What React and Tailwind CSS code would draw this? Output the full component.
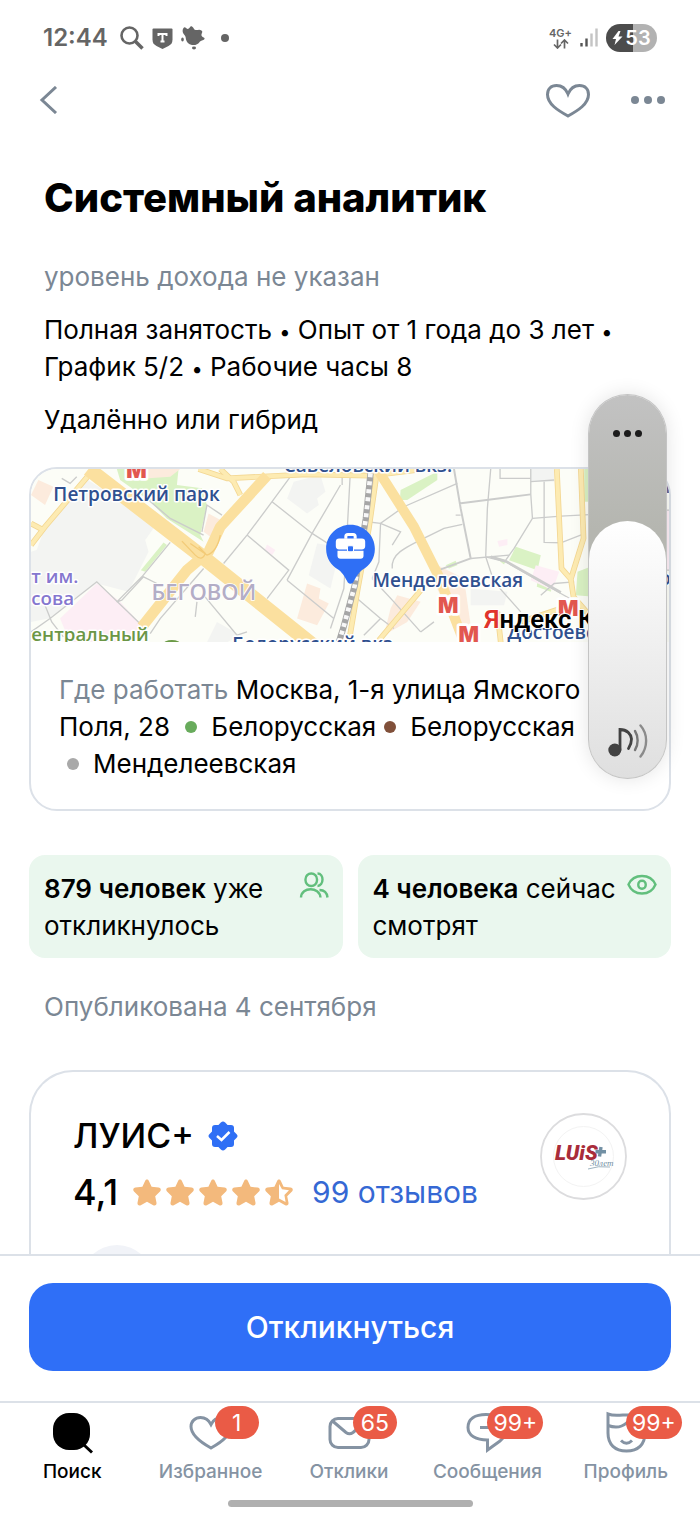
import { useState } from "react";
import clsx from "clsx";

const STATIONS = [
  { name: "Белорусская", dot: "bg-[#68ab5c]" },
  { name: "Белорусская", dot: "bg-[#80503a]" },
  { name: "Менделеевская", dot: "bg-[#a9a9a9]" },
];

const HEART =
  "M24 16.5C21.5 11.5 17.5 9.5 13.5 9.5C8 9.5 4 13.5 4 18.5C4 28 15 35 24 40C33 35 44 28 44 18.5C44 13.5 40 9.5 34.5 9.5C30.5 9.5 26.5 11.5 24 16.5Z";

const TABS = [
  {
    id: "search",
    label: "Поиск",
    icon: (
      <>
        <rect x="5" y="5" width="37" height="37" rx="16" fill="currentColor" stroke="none" />
        <path d="M35 36L44 44.500" />
      </>
    ),
  },
  { id: "favorites", label: "Избранное", badge: "1", icon: <path d={HEART} /> },
  {
    id: "responses",
    label: "Отклики",
    badge: "65",
    icon: (
      <>
        <rect x="5" y="10.500" width="39" height="29" rx="8" />
        <path d="M7.500 13L21 24.500Q24.500 27 28 24.500L41.500 13" />
      </>
    ),
  },
  {
    id: "messages",
    label: "Сообщения",
    badge: "99+",
    icon: (
      <>
        <path d="M23 6.500C12 6.500 5 11 5 19.500C5 27.500 13 32 24.500 32V42L37 33C41 30 43 25 43 19.500C43 11 36 6.500 23 6.500Z" />
        <path d="M17 19.500H32" />
      </>
    ),
  },
  {
    id: "profile",
    label: "Профиль",
    badge: "99+",
    icon: (
      <>
        <path d="M6 6C11 8 16 7.500 21 7H28C33 7.500 38 8 43 6V25C43 36.500 36 43 24.500 43C13 43 6 36.500 6 25Z" />
        <path d="M6 17.500C14 20.500 20 19 24.500 15C29 19 35 20.500 43 17.500" />
        <path d="M19 32.500Q24.500 38 30 32.500" />
      </>
    ),
  },
];

function StatusBar() {
  return (
    <div className="flex h-[76px] items-center justify-between px-[43px] text-[#656565]">
      <div className="flex items-center">
        <span className="text-[24px] leading-8 font-semibold">12:44</span>
        <svg className="ml-3 size-6" viewBox="0 0 24 24" fill="none" stroke="currentColor" strokeWidth="2.600">
          <circle cx="9.500" cy="9.500" r="8" />
          <path d="M15.500 15.500L22.500 22.500" strokeWidth="3.600" />
        </svg>
        <svg className="ml-2 h-6 w-[21px]" viewBox="0 0 21 24">
          <path d="M0.500 3.500Q0.500 2.500 1.500 2.500H19.500Q20.500 2.500 20.500 3.500V13.500Q20.500 18 16.500 20L10.500 23L4.500 20Q0.500 18 0.500 13.500Z" fill="currentColor" />
          <path d="M6.500 10V8H14.500V10M10.500 8V15.500M8.500 15.500H12.500" stroke="#fff" strokeWidth="2" fill="none" />
        </svg>
        <svg className="ml-2 size-6" viewBox="0 0 24 24" fill="currentColor">
          <path d="M2.500 2C4 0 5 3 7 3C9 2.500 9 -0.500 11 0.500C13 1.500 12.500 3.500 14.500 4C16.500 4.500 18 3 20.500 4.500C22.500 6 20 7.500 20.500 9.500C21 11.500 24 11 23.500 13C23 14.500 20.500 14 19 15.500C17 18.500 14 19.500 11 19C7.500 18.500 5.500 16 5 13.500C4.700 12 5 11 3.500 9C1.500 7 1 4 2.500 2Z" />
          <ellipse cx="1.500" cy="13.500" rx="1.300" ry="2" />
          <ellipse cx="13" cy="22" rx="2" ry="1.400" />
        </svg>
        <span className="ml-4 size-2 rounded-full bg-current" />
      </div>
      <div className="flex items-center">
        <div className="flex flex-col items-center">
          <span className="text-[11px] leading-3 font-semibold">4G+</span>
          <svg className="h-[10px] w-4" viewBox="0 0 16 10" fill="none" stroke="currentColor" strokeWidth="1.700">
            <path d="M4.500 0.500V8.500M1 5.500L4.500 9L8 5.500M11.500 9.500V1.500M8 4.500L11.500 1L15 4.500" />
          </svg>
        </div>
        <svg className="ml-2 h-5 w-[18px]" viewBox="0 0 18 20" fill="none" strokeWidth="2.400">
          <path d="M1.500 15V18.500M6.500 10.500V18.500" stroke="#555" />
          <path d="M11.500 5.500V18.500M16.500 0.500V18.500" stroke="#c4c4c4" />
        </svg>
        <div className="ml-2 flex h-7 w-[51px] items-center justify-center gap-[2px] rounded-full bg-linear-to-r from-[#4c4c4c] from-53% to-[#b2b2b2] to-53% text-white">
          <svg className="h-4 w-[11px]" viewBox="0 0 11 16" fill="currentColor">
            <path d="M6.500 1L0.500 9H4L2.500 15L10.500 6.500H6.500L8.500 1Z" />
          </svg>
          <span className="text-[20px] leading-7 font-semibold">53</span>
        </div>
      </div>
    </div>
  );
}

function CityMap() {
  return (
    <svg className="block w-full" viewBox="33 42 1911 519" role="img" aria-label="Карта">
      <rect x="33" y="42" width="1911" height="519" fill="#fcfdf7" />

      {/* built-up areas and parks */}
      <g fill="#f3f4f2">
        <path d="M195 70L410 205L375 255L385 290L325 410L230 385L85 490L33 500V290L50 285L70 230Z" />
        <path d="M820 80L900 60L915 110L890 130L895 150L860 175L800 130Z" />
        <path d="M890 265L960 275L930 400L865 360Z" />
        <path d="M1350 400L1460 410L1450 450L1350 450Z" />
        <path d="M1530 42H1600V80H1530Z" />
        <path d="M590 500L660 540L620 561H560Z" />
      </g>
      <g fill="#daf2c4">
        <path d="M290 42H475L470 90L545 100L560 150L540 240L550 260L440 190L385 135L300 75Z" />
        <path d="M430 262L440 270L375 350L362 345Z" />
        <path d="M200 465L220 452L243 480L222 497Z" />
        <path d="M1140 105L1230 60L1250 50L1250 75L1160 135H1138Z" />
        <path d="M1485 275L1560 300L1550 345L1465 315Z" />
        <path d="M1420 305L1455 315L1450 328Z" />
        <path d="M1275 330L1305 317L1310 330L1285 340Z" />
        <path d="M1550 380L1595 390L1590 410L1548 395Z" />
        <path d="M1690 42H1720V140H1690ZM1670 350L1720 330V425L1665 420Z" />
      </g>
      <g fill="#fcebdd">
        <path d="M55 75L100 95L75 150L33 120Z" />
        <path d="M340 42H480L450 65L385 70Z" />
        <path d="M565 175L610 200L570 245L550 230Z" />
        <path d="M860 385L900 400L895 430L925 445L890 510L830 490Z" />
        <path d="M1130 420L1200 440L1160 500L1090 540L1110 460Z" />
        <path d="M1230 320L1330 370L1350 510L1300 520L1250 400Z" />
      </g>
      <g fill="#fdeef5">
        <path d="M230 385L300 440L365 510L330 561H150L120 490Z" />
        <path d="M740 268L765 285L755 300L733 285Z" />
        <path d="M1430 258L1460 252L1460 270L1435 275Z" />
        <path d="M1545 330L1615 350L1595 405L1530 375Z" />
        <path d="M1935 165H1944V345H1935Z" />
      </g>

      {/* minor streets */}
      <g fill="none" stroke="#cbcccb" strokeWidth="4">
        <path d="M125 70L150 85L170 65M385 135L450 190L550 240M545 230L560 150L605 180" />
        <path d="M450 262L365 365L290 440L305 435L370 365L410 385" />
        <path d="M33 530L90 490L230 380L370 515M75 450L95 500L130 545" />
        <path d="M390 535L420 490L550 340M610 325L680 240L755 140L810 65M755 140L875 235L930 270" />
        <path d="M680 240L805 345L740 430M600 330L700 420M800 375L940 490M960 90L875 235L800 375" />
        <path d="M530 440L525 485M550 420L650 540L680 530" />
        <path d="M965 60V90M990 42L975 320L970 400L930 520" />
        <path d="M1300 42L1320 160L1350 310L1240 350M1315 145L1530 118" strokeWidth="6" />
        <path d="M1410 42L1400 160L1395 305M1438 42V70H1530M1310 85L1150 155L1080 205L1040 200" />
        <path d="M1530 42V118L1535 190L1480 280L1455 315M1535 190L1620 183L1720 178M1305 180H1320" />
        <path d="M1570 80V262L1620 263L1685 238M1530 80L1600 75M1350 310L1465 300" />
        <path d="M1115 340C1110 290 1160 275 1270 220L1325 208M1080 205L1075 320L1055 370M1080 205L1140 230L1115 270" />
        <path d="M1055 370L1120 440L1200 530M1010 430L1080 490L1030 540M1080 490L1120 520M1200 530L1240 500" />
        <path d="M1395 305L1455 320L1620 415L1665 440M1395 305L1420 380L1500 470M1660 380L1600 385L1560 420" />
        <path d="M1935 165H1944M1935 345H1944" />
      </g>
      <path d="M1410 305L1455 318L1620 412" fill="none" stroke="#cbcccb" strokeWidth="8" />

      {/* secondary yellow roads */}
      <g fill="none" stroke="#f3d793" strokeWidth="17">
        <path d="M33 270L75 215L215 50M33 205L70 225" />
        <path d="M535 42L620 70L860 58L1050 62L1190 45M600 42L640 80L660 120" />
        <path d="M1068 60L1045 220L1012 400L985 561" />
        <path d="M1608 42L1622 340L1650 372L1688 250L1680 42M1650 372L1658 425L1710 485" />
        <path d="M1205 400L1075 555M1500 500L1620 460M1430 470L1440 561" />
      </g>
      <g fill="none" stroke="#fdebb2" strokeWidth="12">
        <path d="M33 270L75 215L215 50M33 205L70 225" />
        <path d="M535 42L620 70L860 58L1050 62L1190 45M600 42L640 80L660 120" />
        <path d="M1068 60L1045 220L1012 400L985 561" />
        <path d="M1608 42L1622 340L1650 372L1688 250L1680 42M1650 372L1658 425L1710 485" />
        <path d="M1205 400L1075 555M1500 500L1620 460M1430 470L1440 561" />
      </g>

      {/* avenues */}
      <g fill="none" stroke="#fbe09f" strokeLinejoin="round">
        <path d="M205 42L540 300L890 580" strokeWidth="44" />
        <path d="M365 515L500 345L565 290L600 215L740 62" strokeWidth="32" />
        <path d="M1075 50L1180 215L1255 365L1330 561" strokeWidth="30" />
      </g>
      <path d="M485 258L525 300Q545 320 555 295L535 275M510 265L560 300Q590 290 600 240" fill="none" stroke="#f3cb78" strokeWidth="4" />

      {/* railway */}
      <path d="M1050 55L1036 190L1003 390L968 520L955 561" fill="none" stroke="#a6a6a6" strokeWidth="19" />
      <path d="M1050 55L1036 190L1003 390L968 520L955 561" fill="none" stroke="#f8f8f8" strokeWidth="14" strokeDasharray="12 12" />

      <ellipse cx="455" cy="568" rx="26" ry="14" fill="#6b9a46" />

      <g fontFamily="'Open Sans', 'Noto Sans', sans-serif" fontWeight="600" stroke="#fff" strokeWidth="9" strokeLinejoin="round" paintOrder="stroke">
        <g fill="#e2574f" fontFamily="Inter, sans-serif" fontWeight="900" fontSize="64" textAnchor="middle" strokeWidth="16">
          <text x="349" y="70">М</text>
          <text x="1283" y="472">М</text>
          <text x="1344" y="561">М</text>
          <text x="1642" y="482">М</text>
        </g>
        <g fill="#30508f" fontSize="57">
          <text x="100" y="138">Петровский парк</text>
          <text x="790" y="50">Савеловский вкз.</text>
          <text x="636" y="588">Белорусский вкз.</text>
          <text x="1056" y="394">Менделеевская</text>
          <text x="1460" y="550">Достоевская</text>
          <text x="1915" y="115">л</text>
          <text x="1915" y="388">о</text>
        </g>
        <g fill="#8577cf" fontSize="56">
          <text x="34" y="383">т им.</text>
          <text x="34" y="450">сова</text>
        </g>
        <text x="34" y="556" fill="#6b9646" fontSize="56">ентральный</text>
        <text x="394" y="435" fill="#b3adc6" fontSize="66" strokeWidth="5">БЕГОВОЙ</text>
      </g>
      <text x="1390" y="519" fontFamily="Roboto, sans-serif" fontWeight="600" fontSize="77" stroke="#fff" strokeWidth="6" paintOrder="stroke">
        <tspan fill="#e0342b">Я</tspan>ндекс Карты
      </text>

      {/* workplace pin */}
      <path d="M990 209C1030 209 1063 241 1063 281C1063 310 1048 330 1026 344C1012 354 1004 372 998 382Q990 390 982 382C976 372 968 354 954 344C932 330 917 310 917 281C917 241 950 209 990 209Z" fill="#2f6ff5" />
      <path d="M976 251V244Q976 238 982 238H998Q1004 238 1004 244V251" fill="none" stroke="#fff" strokeWidth="9" />
      <rect x="946" y="250" width="88" height="33" rx="10" fill="#fff" />
      <path d="M951 287H1029V302Q1029 311 1020 311H960Q951 311 951 302Z" fill="#fff" />
      <rect x="981" y="272" width="18" height="18" rx="4" fill="#2f6ff5" stroke="#fff" strokeWidth="3" />
    </svg>
  );
}

function Sep() {
  return <span className="text-[20px] leading-none">•</span>;
}

function Stat({ strong, rest, children }) {
  return (
    <div className="flex items-start justify-between rounded-2xl bg-[#eaf7ee] pt-[15px] pr-[14px] pb-[14px] pl-[15px]">
      <p>
        <span className="font-semibold">{strong}</span> {rest}
      </p>
      <svg className="-ml-6 size-[30px] shrink-0 text-[#62bf7d]" viewBox="0 0 30 30" fill="none" stroke="currentColor" strokeWidth="2.400">
        {children}
      </svg>
    </div>
  );
}

const STAR =
  "M15 2.500C15.800 2.500 16.400 3 16.800 3.800L19.600 9.800L26.600 10.600C28.800 11 29.500 13 28 14.600L23.200 19.200L24.500 25.800C24.800 28 23 29.200 21.200 28.200L15 24.800L8.800 28.200C7 29.200 5.200 28 5.500 25.800L6.800 19.200L2 14.600C0.500 13 1.200 11 3.400 10.600L10.400 9.800L13.200 3.800C13.600 3 14.200 2.500 15 2.500Z";

function Star({ half }) {
  return (
    <svg className="size-[30px]" viewBox="0 0 30 30" fill="#f3b97c">
      <path d={STAR} />
      {half && <path d="M15 7L18 12.300L25 13.200L20.400 18L21.600 25L15 21.600Z" fill="#fff" />}
    </svg>
  );
}

function CompanyLogo() {
  return (
    <svg className="size-[87px] shrink-0" viewBox="0 0 87 87" role="img" aria-label="LUIS+">
      <circle cx="43.500" cy="43.500" r="42.500" fill="#fff" stroke="#dcdcde" strokeWidth="1.800" />
      <circle cx="43.500" cy="43.500" r="30" fill="none" stroke="#f3f3f3" />
      <text x="15" y="47" fontFamily="Roboto, sans-serif" fontStyle="italic" fontWeight="900" fontSize="21" fill="#a92c3a">
        LUiS
      </text>
      <path d="M61 34L59.500 43.500M55.500 38.800H66" stroke="#7290a4" strokeWidth="3.400" />
      <text x="50" y="53" fontFamily="'Liberation Serif', serif" fontStyle="italic" fontSize="9" fill="#7290a4">
        30лет
      </text>
      <path d="M48 56Q58 52.500 70 54" stroke="#7290a4" strokeWidth="0.700" fill="none" />
    </svg>
  );
}

function VolumeSlider() {
  const [volume, setVolume] = useState(67);

  return (
    <div className="fixed top-[395px] right-[34px] flex h-[383px] w-[77px] flex-col justify-end overflow-hidden rounded-full bg-linear-to-b from-[#c2c2c2] to-[#b5b6b0] to-35% shadow-[0_0_20px_rgba(0,0,0,0.12)] ring-1 ring-[#c4c4c4]">
      <div
        className="flex items-end justify-center rounded-t-full bg-linear-to-b from-white to-[#dfdfdf] pb-5"
        style={{ height: `${volume}%` }}
      >
        <svg className="h-[34px] w-10" viewBox="0 0 40 34" fill="none" strokeLinecap="round">
          <circle cx="6.800" cy="26" r="6.500" fill="#424242" />
          <path d="M12 26V5.500C19 5.500 23 10 23.500 15C23.500 19 22.500 21.500 20.500 24.500" stroke="#424242" strokeWidth="2.800" />
          <path d="M27 7C30.500 12.500 30.500 20.500 27 26" stroke="#777" strokeWidth="2.400" />
          <path d="M32.500 1.500C40 10 40 23 32.500 32.500" stroke="#8b8b8b" strokeWidth="2.400" />
        </svg>
      </div>
      <input
        type="range"
        aria-label="Громкость"
        value={volume}
        onChange={(e) => setVolume(Number(e.target.value))}
        className="absolute inset-0 h-full w-full opacity-0 [direction:rtl] [writing-mode:vertical-lr]"
      />
      <button aria-label="Ещё настройки звука" className="absolute inset-x-0 top-[26px] flex h-6 items-center justify-center gap-1">
        <span className="size-[7px] rounded-full bg-[#1c1c1c]" />
        <span className="size-[7px] rounded-full bg-[#1c1c1c]" />
        <span className="size-[7px] rounded-full bg-[#1c1c1c]" />
      </button>
    </div>
  );
}

export default function App() {
  const [tab, setTab] = useState("search");
  const [liked, setLiked] = useState(false);

  return (
    <div className="flex h-screen flex-col bg-white font-[Inter,sans-serif] text-[26px] leading-[37px] text-black">
      <StatusBar />

      <header className="flex h-12 shrink-0 items-center justify-between px-[35px] text-[#7b8794]">
        <button aria-label="Назад">
          <svg className="size-7" viewBox="0 0 28 28" fill="none" stroke="currentColor" strokeWidth="3">
            <path d="M21 1L7 14L21 27" />
          </svg>
        </button>
        <div className="flex items-center gap-[39px]">
          <button aria-label="В избранное" onClick={() => setLiked(!liked)}>
            <svg className="size-12" viewBox="0 0 48 48" fill={liked ? "currentColor" : "none"} stroke="currentColor" strokeWidth="3">
              <path d="M24 18C21.500 12 17 9.500 12.500 9.500C7 9.500 3.500 13 3.500 18.500C3.500 28 14 34.500 24 40C34 34.500 44.500 28 44.500 18.500C44.500 13 41 9.500 35.500 9.500C31 9.500 26.500 12 24 18Z" />
            </svg>
          </button>
          <button aria-label="Ещё" className="flex gap-[5px]">
            <span className="size-2 rounded-full bg-current" />
            <span className="size-2 rounded-full bg-current" />
            <span className="size-2 rounded-full bg-current" />
          </button>
        </div>
      </header>

      <main className="min-h-0 flex-1 overflow-y-auto px-[29px] [scrollbar-width:none]">
        <div className="px-[15px]">
          <h1 className="mt-[46px] text-[40px] leading-[56px] font-extrabold">Системный аналитик</h1>
          <p className="mt-8 text-[#7b8794]">уровень дохода не указан</p>
          <p className="mt-4">
            Полная занятость <Sep /> Опыт от 1 года до 3 лет <Sep /> График 5/2 <Sep /> Рабочие часы 8
          </p>
          <p className="mt-4">Удалённо или гибрид</p>
        </div>

        <section className="mt-[29px] overflow-hidden rounded-[28px] border-2 border-[#dce1e8]">
          <CityMap />
          <p className="px-7 pt-[29px] pb-[27px]">
            <span className="text-[#7b8794]">Где работать</span> Москва, 1-я улица Ямского Поля, 28{" "}
            {STATIONS.map((s, i) => (
              <span key={i} className="inline-block whitespace-nowrap">
                <span className={clsx("mr-[14px] mb-[3px] ml-2 inline-block size-3 rounded-full", s.dot)} />
                {s.name}
              </span>
            ))}
          </p>
        </section>

        <div className="mt-11 grid grid-cols-2 gap-[15px]">
          <Stat strong="879 человек" rest="уже откликнулось">
            <rect x="6.500" y="3.500" width="11.500" height="12.500" rx="5.700" />
            <path d="M18.500 3.500C22 3.500 23.500 6.500 23.500 9.500C23.500 13 21.500 16 18.500 16" />
            <path d="M2 27.500C2.500 16.500 20.500 16.500 21.500 27.500M20.500 20C25 20 28 23 28.500 27.500" />
          </Stat>
          <Stat strong="4 человека" rest="сейчас смотрят">
            <path d="M1.500 14.500C4 9 9 6 15 6C21 6 26 9 28.500 14.500C26 20.500 21 23.500 15 23.500C9 23.500 4 20.500 1.500 14.500Z" />
            <rect x="11.300" y="10.800" width="7.400" height="8" rx="3.500" />
          </Stat>
        </div>

        <p className="mt-[30px] px-[15px] text-[#7b8794]">Опубликована 4 сентября</p>

        <section className="mt-[45px] rounded-t-[44px] border-2 border-b-0 border-[#dce1e8] px-[42px] pt-[41px]">
          <div className="flex justify-between">
            <div>
              <h2 className="flex items-center gap-[14px] text-[34px] leading-[46px] font-medium">
                ЛУИС+
                <svg className="size-[30px]" viewBox="0 0 30 30" aria-label="Проверенная компания" role="img">
                  <g fill="#2f6ff5">
                    <rect x="4" y="4" width="22" height="22" rx="3" />
                    <rect x="4" y="4" width="22" height="22" rx="3" transform="rotate(45 15 15)" />
                  </g>
                  <path d="M9 15L13.500 19L21.500 11" fill="none" stroke="#fff" strokeWidth="2.500" />
                </svg>
              </h2>
              <div className="mt-[10px] flex items-center">
                <span className="text-[36px] leading-[46px] font-medium">4,1</span>
                <span className="ml-[14px] flex gap-[3px]">
                  <Star />
                  <Star />
                  <Star />
                  <Star />
                  <Star half />
                </span>
                <a href="#reviews" className="ml-[18px] text-[30px] text-[#3568d4]">
                  99 отзывов
                </a>
              </div>
            </div>
            <CompanyLogo />
          </div>
          <div className="mt-[30px] ml-2 size-[72px] rounded-full bg-[#f1f3f8]" />
        </section>
      </main>

      <footer className="shrink-0 border-t-2 border-[#dce1e8] bg-white">
        <div className="px-[29px] pt-[27px] pb-[30px]">
          <button className="h-[88px] w-full rounded-3xl bg-[#2f6ff7] text-[30px] font-medium text-white">Откликнуться</button>
        </div>
        <nav className="grid grid-cols-5 border-t-2 border-[#dce1e8] pt-[5px] pr-[5px] pl-[3px]">
          {TABS.map((t) => (
            <button
              key={t.id}
              onClick={() => setTab(t.id)}
              className={clsx(
                "relative flex flex-col items-center text-[19px] leading-8 font-medium",
                tab === t.id ? "text-black" : "text-[#8593a3]"
              )}
            >
              <svg className="size-12" viewBox="0 0 48 48" fill="none" stroke="currentColor" strokeWidth="3">
                {t.icon}
              </svg>
              <span>{t.label}</span>
              {t.badge && (
                <span
                  className={clsx(
                    "absolute -top-[2px] left-1/2 flex h-[33px] items-center justify-center rounded-full bg-[#ea5b46] text-[23px] font-normal text-white",
                    t.badge.length > 2 ? "w-14" : "ml-1 w-11"
                  )}
                >
                  {t.badge}
                </span>
              )}
            </button>
          ))}
        </nav>
        <div className="mx-auto mt-3 mb-[10px] h-[7px] w-[35%] rounded-full bg-[#b0b0b0]" />
      </footer>

      <VolumeSlider />
    </div>
  );
}
